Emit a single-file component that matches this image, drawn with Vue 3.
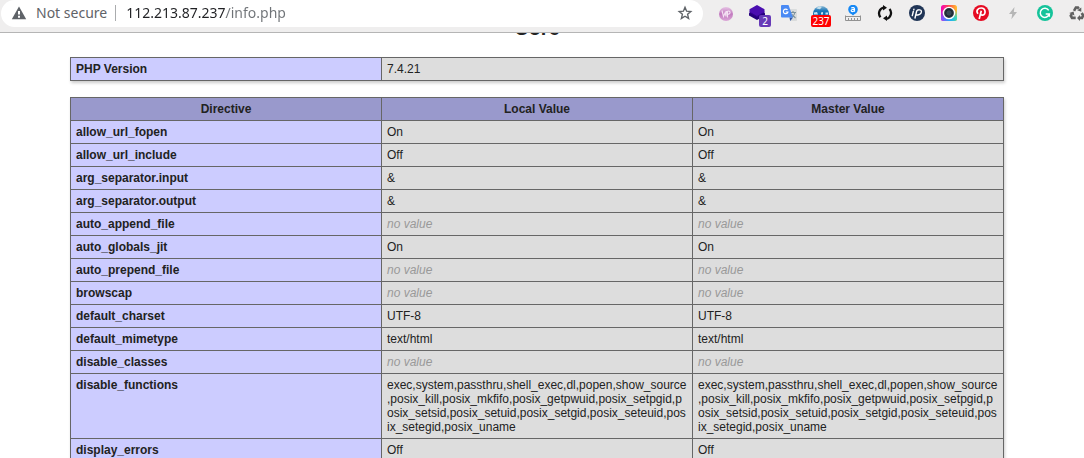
<script setup>
import { ref } from 'vue'

const address = ref('112.213.87.237/info.php')

const disabled =
  'exec,system,passthru,shell_exec,dl,popen,show_source,posix_kill,posix_mkfifo,posix_getpwuid,posix_setpgid,posix_setsid,posix_setuid,posix_setgid,posix_seteuid,posix_setegid,posix_uname'

const directives = [
  ['allow_url_fopen', 'On'],
  ['allow_url_include', 'Off'],
  ['arg_separator.input', '&'],
  ['arg_separator.output', '&'],
  ['auto_append_file', null],
  ['auto_globals_jit', 'On'],
  ['auto_prepend_file', null],
  ['browscap', null],
  ['default_charset', 'UTF-8'],
  ['default_mimetype', 'text/html'],
  ['disable_classes', null],
  ['disable_functions', disabled],
  ['display_errors', 'Off'],
]
</script>

<template>
  <div class="browser">
    <header class="toolbar">
      <div class="omnibox">
        <svg class="warn" viewBox="0 0 16 16" aria-hidden="true">
          <path d="M8 1.600 15.200 14.200H.8z" fill="#5f6368" />
          <path d="M7 6h2v3.400H7zM7 10.800h2v2H7z" fill="#fff" />
        </svg>
        <span class="security">Not secure</span>
        <span class="divider"></span>
        <input v-model="address" class="address" type="text" aria-label="Address" spellcheck="false" />
        <button class="icon" type="button" aria-label="Bookmark this page">
          <svg viewBox="0 0 16 16">
            <path d="M8 2.300 9.600 6.200l4.200.3-3.200 2.800 1 4.100L8 11.200 4.400 13.400l1-4.100-3.200-2.800 4.200-.3z" fill="none" stroke="#5f6368" stroke-width="1.400" />
          </svg>
        </button>
      </div>

      <nav class="extensions" aria-label="Extensions">
        <button class="icon" type="button" aria-label="WordPress detector">
          <svg viewBox="0 0 16 16">
            <defs>
              <linearGradient id="pink" x1="0" y1="0" x2="0" y2="1">
                <stop offset="0" stop-color="#e6c3e4" />
                <stop offset=".5" stop-color="#c27abf" />
                <stop offset="1" stop-color="#dba6d7" />
              </linearGradient>
            </defs>
            <circle cx="9" cy="9" r="7" fill="url(#pink)" />
            <path d="M5 5.500 6.500 11.500 8.200 7.500l.8 4 .5-5.500M10.500 6v6.500M10.500 6.200c3.400-1 3.400 3.300 0 3" fill="none" stroke="#f4e2f3" stroke-width="1.100" />
          </svg>
        </button>
        <button class="icon" type="button" aria-label="Layers, 2 items">
          <svg viewBox="0 0 16 16">
            <path d="M0 8.200 8 4l8 4.200v2.300L8 15 0 10.500z" fill="#25007c" />
            <path d="M8 0 15.500 4.200v3L8 11.500.5 7.200v-3z" fill="#4a0eb0" />
            <path d="M.5 7.200 8 11.500l7.500-4.300" fill="none" stroke="#310390" />
          </svg>
          <span class="badge violet">2</span>
        </button>
        <button class="icon" type="button" aria-label="Translate">
          <svg viewBox="0 0 16 16">
            <path d="M7 4h8.200a.8.800 0 0 1 .8.800v10.400a.8.800 0 0 1-.8.800H9z" fill="#dadcdc" />
            <path d="M8.500 12.500H12L9.200 16z" fill="#3157a5" />
            <path d="M9.500 7.500h5.500M12 6v1.500M14 7.500c-.5 2.500-2 4-3.500 5M11 9.500l3.500 3.500" fill="none" stroke="#7d929d" stroke-width="1.100" />
            <path d="M1 0h6.500L12 12.500H1a1 1 0 0 1-1-1V1a1 1 0 0 1 1-1z" fill="#4a8af4" />
            <path d="M6.500 5A2.300 2.300 0 1 0 6.900 7H4.700" fill="none" stroke="#fff" stroke-width="1.200" />
          </svg>
        </button>
        <button class="icon" type="button" aria-label="Site rank, 237">
          <svg viewBox="0 0 16 16">
            <defs>
              <linearGradient id="globe" x1="0" y1="0" x2="0" y2="1">
                <stop offset="0" stop-color="#8cb8d3" />
                <stop offset=".3" stop-color="#1976b8" />
                <stop offset="1" stop-color="#08589c" />
              </linearGradient>
            </defs>
            <circle cx="8" cy="9" r="8" fill="url(#globe)" />
            <path d="M3.500 3.500c1.500-2.500 4-2.500 5.500-1.700L7 4.200z" fill="#c5dfeb" />
            <path d="M1 7.500 4 7l1 2.500H1zM8 7.500l2-.5v2.500H8zM12.500 7.500H15v2h-2.500z" fill="#c3e3f3" />
          </svg>
          <span class="badge red">237</span>
        </button>
        <button class="icon" type="button" aria-label="Ruler">
          <svg viewBox="0 0 16 16">
            <circle cx="8" cy="4.500" r="4.800" fill="#1688f5" />
            <path d="m6 8.500 2 2 2-2z" fill="#1688f5" />
            <path d="M6.200 3.100c1.500-1 3.300-.5 3.300 1.200v2.500M9.500 4.500H7.600c-2 0-1.700 2.200-.1 2.100 1 0 1.900-.6 1.900-1.500" fill="none" stroke="#fff" stroke-width="1.200" />
            <path d="M.5 10.500v5h15v-5M3.500 13v2.500M6.500 13v2.500M9.500 13v2.500M12.500 13v2.500M.5 11.500h15" fill="none" stroke="#929292" />
          </svg>
        </button>
        <button class="icon" type="button" aria-label="Reload tabs">
          <svg viewBox="0 0 16 16">
            <path d="M6.500 2.500A6 6 0 0 0 3.500 12.200M9.500 13.800A6 6 0 0 0 12.500 4" fill="none" stroke="#111" stroke-width="2.300" />
            <path d="M6 0v5.500L10 2.700zM10 10.500V16l-4-2.700z" fill="#111" />
          </svg>
        </button>
        <button class="icon" type="button" aria-label="IP address">
          <svg viewBox="0 0 16 16">
            <circle cx="8" cy="8" r="8" fill="#203556" />
            <path d="M4.300 6.500 3.300 10.600M4.900 4.200l-.1.600M6 13 7.700 6c.5-1.400 5-2 4.700.8-.2 2.600-2.900 3.500-5.100 3" fill="none" stroke="#fff" stroke-width="1.400" stroke-linecap="round" />
          </svg>
        </button>
        <button class="icon" type="button" aria-label="Camera">
          <svg viewBox="0 0 16 16">
            <defs>
              <linearGradient id="warm" x1="0" y1="0" x2="1" y2="0">
                <stop offset="0" stop-color="#f500b8" />
                <stop offset=".5" stop-color="#ff4f4b" />
                <stop offset="1" stop-color="#ffc22d" />
              </linearGradient>
              <linearGradient id="cool" x1="0" y1="0" x2="1" y2="0">
                <stop offset="0" stop-color="#9a45fa" />
                <stop offset=".55" stop-color="#20a8fa" />
                <stop offset="1" stop-color="#3bdeb2" />
              </linearGradient>
              <linearGradient id="fade" x1="0" y1="0" x2="0" y2="1">
                <stop offset=".3" stop-color="#fff" stop-opacity="0" />
                <stop offset=".8" stop-color="#fff" />
              </linearGradient>
              <mask id="lower"><rect width="16" height="16" fill="url(#fade)" /></mask>
            </defs>
            <rect width="16" height="16" rx="2.500" fill="url(#warm)" />
            <rect width="16" height="16" rx="2.500" fill="url(#cool)" mask="url(#lower)" />
            <circle cx="8" cy="8" r="5.600" fill="#2b3742" stroke="#fff" stroke-width="1.400" />
            <circle cx="8" cy="8" r="3.300" fill="#384955" stroke="#17222c" />
          </svg>
        </button>
        <button class="icon" type="button" aria-label="Pinterest">
          <svg viewBox="0 0 16 16">
            <circle cx="8" cy="8" r="8" fill="#e60b23" />
            <path d="M5 8.800C2.500 5.800 5 3 8.300 3c4.500 0 5 6.700 1.300 7.100-1 .1-1.600-.4-1.900-.9M8.300 5.800 6.200 14" fill="none" stroke="#fff" stroke-width="1.700" />
          </svg>
        </button>
        <button class="icon" type="button" aria-label="Power">
          <svg viewBox="0 0 16 16">
            <path d="M9.500 2 4 9h3.200l-.8 5.300L12 7H8.800z" fill="#b6b6b6" />
          </svg>
        </button>
        <button class="icon" type="button" aria-label="Grammar">
          <svg viewBox="0 0 16 16">
            <circle cx="8" cy="8" r="8" fill="#15c39a" />
            <path d="M11.700 5.300A4.600 4.600 0 1 0 12.300 9H8.700M12.300 8.400v3.300" fill="none" stroke="#fff" stroke-width="1.500" />
          </svg>
        </button>
        <button class="icon" type="button" aria-label="Recycle">
          <svg viewBox="0 0 16 16">
            <g fill="none" stroke="#606060" stroke-width="2.600">
              <path d="M5 5.800 6.900 2.500h2l.8 1.300" />
              <path d="m12.700 8 1.500 2.500-1.200 2.400h-2.200" />
              <path d="M6.700 12.900H3l-1.200-2.200L2.900 9" />
            </g>
            <path d="m8.200 5.200 4.100-2.800v4.400zM11 9.900v6l-3-3zM.2 8l4.400-1.500.8 4z" fill="#606060" />
          </svg>
        </button>
      </nav>
    </header>

    <main class="page">
      <h2>Core</h2>
      <table>
        <tbody>
          <tr>
            <th class="e" scope="row">PHP Version</th>
            <td colspan="2">7.4.21</td>
          </tr>
        </tbody>
      </table>

      <table>
        <thead>
          <tr>
            <th scope="col">Directive</th>
            <th scope="col">Local Value</th>
            <th scope="col">Master Value</th>
          </tr>
        </thead>
        <tbody>
          <tr v-for="[name, value] in directives" :key="name">
            <th class="e" scope="row">{{ name }}</th>
            <td v-for="column in 2" :key="column">
              <i v-if="value === null">no value</i>
              <template v-else>{{ value }}</template>
            </td>
          </tr>
        </tbody>
      </table>
    </main>
  </div>
</template>

<style>
body {
  margin: 0;
  background: #fff;
}
</style>

<style scoped>
.browser {
  display: flex;
  flex-direction: column;
  height: 100vh;
  overflow: hidden;
  color: #222;
  font-family: "Liberation Sans", Arial, sans-serif;
}
.toolbar {
  display: flex;
  flex: none;
  height: 32px;
  overflow: hidden;
  background: #efeeee;
  border-bottom: 1px solid #b5b5b5;
}
.omnibox {
  display: flex;
  flex: 1;
  align-items: center;
  box-sizing: border-box;
  min-width: 0;
  height: 27px;
  margin-left: 1px;
  padding: 0 10px 2px;
  background: #fff;
  border-radius: 14px;
  font: 14px/20px "Noto Sans", sans-serif;
}
.warn {
  flex: none;
  width: 16px;
  height: 16px;
}
.security {
  margin-left: 9px;
  color: #5f6368;
  white-space: nowrap;
}
.divider {
  width: 1px;
  height: 16px;
  margin: 0 10px 0 8px;
  background: #aaacae;
}
.address {
  flex: 1;
  min-width: 0;
  padding: 0;
  border: 0;
  outline: 0;
  font: inherit;
  color: transparent;
  caret-color: #222;
  background: linear-gradient(90deg, #202124 100px, #6f7377 100px);
  -webkit-background-clip: text;
  background-clip: text;
}
.extensions {
  display: flex;
  flex: 0 0 381px;
  gap: 16px;
  box-sizing: border-box;
  min-width: 0;
  padding: 5px 0 0 14px;
}
.icon {
  position: relative;
  flex: none;
  width: 16px;
  height: 16px;
  padding: 0;
  border: 0;
  background: none;
}
.icon svg {
  display: block;
  width: 16px;
  height: 16px;
}
.badge {
  position: absolute;
  top: 10px;
  height: 12px;
  border-radius: 2px;
  color: #fff;
  font: 10px/12px "Noto Sans", sans-serif;
  text-align: center;
}
.violet {
  left: 10px;
  width: 12px;
  background: #673ab7;
}
.red {
  left: -2px;
  width: 20px;
  background: #f00;
}
.page {
  flex: 1;
  min-height: 0;
  padding: 0 80px 0 70px;
  overflow: hidden;
}
h2 {
  margin: -16px 0 17px;
  font-size: 20px;
  line-height: 23px;
  text-align: center;
}
table {
  width: 100%;
  margin-bottom: 16px;
  table-layout: fixed;
  border-collapse: collapse;
  box-shadow: 1px 2px 3px #ccc;
  font-size: 12px;
  line-height: 14px;
}
th,
td {
  padding: 4px 5px;
  border: 1px solid #666;
  vertical-align: baseline;
}
th {
  background: #99c;
}
.e {
  background: #ccf;
  text-align: left;
}
td {
  background: #ddd;
  overflow-wrap: break-word;
}
i {
  color: #999;
}
</style>
